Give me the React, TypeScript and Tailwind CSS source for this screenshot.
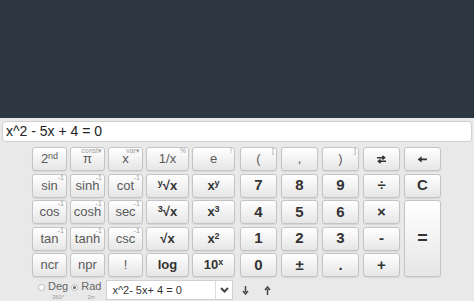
import React from "react";

type Key = {
	label: React.ReactNode;
	sup?: string;
	bold?: boolean;
	cls?: string;
};

function Btn({ label, sup, bold, cls = "" }: Key) {
	return (
		<div
			className={`relative flex items-center justify-center rounded-[3px] border border-[#c4c4c4] bg-gradient-to-b from-[#ffffff] to-[#e6e6e6] shadow-[0_1px_1px_rgba(0,0,0,0.08)] ${
				bold ? "font-bold text-[#333] text-[15px]" : "text-[#5a5a5a] text-[13px]"
			} ${cls}`}
		>
			{label}
			{sup && (
				<span className="absolute right-[2px] top-[-1px] text-[7px] leading-[8px] font-normal text-[#9a9a9a]">{sup}</span>
			)}
		</div>
	);
}

function Swap() {
	return (
		<svg width="11" height="9" viewBox="0 0 12 10">
			<path d="M1 3h8M7 1l2.5 2L7 5" stroke="#333" strokeWidth="1.6" fill="none" />
			<path d="M11 7H3M5 5L2.5 7 5 9" stroke="#333" strokeWidth="1.6" fill="none" />
		</svg>
	);
}

function Back() {
	return (
		<svg width="11" height="8" viewBox="0 0 12 9">
			<path d="M0.5 5L5 1.5V4H11V6H5V8.5Z" fill="#333" />
		</svg>
	);
}

function Sup({ base, sup, pre }: { base: string; sup: string; pre?: boolean }) {
	const s = <span className="relative -top-[4px] text-[9px]">{sup}</span>;
	return (
		<span className="font-bold text-[#333] text-[13px]">
			{pre && s}
			{base}
			{!pre && s}
		</span>
	);
}

export default function App() {
	const left: Key[] = [
		{ label: <span>2<span className="relative -top-[4px] text-[9px]">nd</span></span> },
		{ label: "π", sup: "const▾" },
		{ label: "x", sup: "var▾" },
		{ label: "1/x", sup: "%" },
		{ label: "e", sup: "!" },
		{ label: "sin", sup: "-1" },
		{ label: "sinh", sup: "-1" },
		{ label: "cot", sup: "-1" },
		{ label: <Sup base="√x" sup="y" pre /> },
		{ label: <Sup base="x" sup="y" /> },
		{ label: "cos", sup: "-1" },
		{ label: "cosh", sup: "-1" },
		{ label: "sec", sup: "-1" },
		{ label: <Sup base="√x" sup="3" pre /> },
		{ label: <Sup base="x" sup="3" /> },
		{ label: "tan", sup: "-1" },
		{ label: "tanh", sup: "-1" },
		{ label: "csc", sup: "-1" },
		{ label: <span className="font-bold text-[#333] text-[13px]">√x</span> },
		{ label: <Sup base="x" sup="2" /> },
		{ label: "ncr" },
		{ label: "npr" },
		{ label: "!" },
		{ label: <span className="font-bold text-[#333] text-[13px]">log</span> },
		{ label: <Sup base="10" sup="x" /> },
	];

	return (
		<div className="w-[474px] h-[301px] overflow-hidden bg-[#e9e9e9] font-['Liberation_Sans',Arial,sans-serif]">
			<div className="h-[118px] bg-[#2d3741]" />
			<div className="mx-[2px] mt-[3px] h-[21px] rounded-[4px] border border-[#d0d0d0] bg-white flex items-center pl-[3px] text-[14px] text-[#222]">
				x^2 - 5x + 4 = 0
			</div>
			<div className="flex pl-[32px] mt-[5px] gap-[5px]">
				<div className="grid grid-cols-[35px_35px_35px_43px_43px] grid-rows-[24px_24px_24px_24px_24px] gap-x-[3px] gap-y-[2.5px]">
					{left.map((k, i) => (
						<Btn key={i} {...k} />
					))}
				</div>
				<div className="grid grid-cols-[37px_37px_37px_37px_37px] grid-rows-[24px_24px_24px_24px_24px] gap-x-[4px] gap-y-[2.5px]">
					<Btn label="(" sup="[" />
					<Btn label="," />
					<Btn label=")" sup="]" />
					<Btn label={<Swap />} />
					<Btn label={<Back />} />
					<Btn label="7" bold />
					<Btn label="8" bold />
					<Btn label="9" bold />
					<Btn label="÷" bold />
					<Btn label="C" bold />
					<Btn label="4" bold />
					<Btn label="5" bold />
					<Btn label="6" bold />
					<Btn label="×" bold />
					<Btn label="=" bold cls="row-span-3 text-[18px]" />
					<Btn label="1" bold />
					<Btn label="2" bold />
					<Btn label="3" bold />
					<Btn label="-" bold />
					<Btn label="0" bold />
					<Btn label="±" bold />
					<Btn label="." bold />
					<Btn label="+" bold />
				</div>
			</div>
			<div className="flex items-center pl-[38px] mt-[3px] h-[20px]">
				<div className="flex items-start gap-[3px]">
					<span className="mt-[3px] w-[7px] h-[7px] rounded-full border border-[#bbb] bg-white" />
					<div className="flex flex-col items-center leading-none">
						<span className="text-[11px] text-[#666]">Deg</span>
						<span className="text-[6px] text-[#999] mt-[2px]">360°</span>
					</div>
				</div>
				<div className="flex items-start gap-[3px] ml-[3px]">
					<span className="mt-[3px] w-[7px] h-[7px] rounded-full border border-[#bbb] bg-white flex items-center justify-center">
						<span className="w-[3px] h-[3px] rounded-full bg-[#666]" />
					</span>
					<div className="flex flex-col items-center leading-none">
						<span className="text-[11px] text-[#666]">Rad</span>
						<span className="text-[6px] text-[#999] mt-[2px]">2π</span>
					</div>
				</div>
				<div className="ml-[5px] w-[127px] h-[20px] border border-[#d0d0d0] bg-white flex">
					<div className="flex-1 flex items-center pl-[5px] text-[11px] text-[#333]">x^2- 5x+ 4 = 0</div>
					<div className="w-[17px] border-l border-[#ddd] flex items-center justify-center">
						<svg width="9" height="6" viewBox="0 0 9 6">
							<path d="M1 1l3.5 3.5L8 1" stroke="#444" strokeWidth="2" fill="none" />
						</svg>
					</div>
				</div>
				<svg className="ml-[9px]" width="7" height="9" viewBox="0 0 7 9">
					<path d="M3.5 0v6M1 5l2.5 3L6 5" stroke="#444" strokeWidth="1.5" fill="none" />
				</svg>
				<svg className="ml-[15px]" width="7" height="9" viewBox="0 0 7 9">
					<path d="M3.5 9V3M1 4l2.5-3L6 4" stroke="#444" strokeWidth="1.5" fill="none" />
				</svg>
			</div>
		</div>
	);
}
